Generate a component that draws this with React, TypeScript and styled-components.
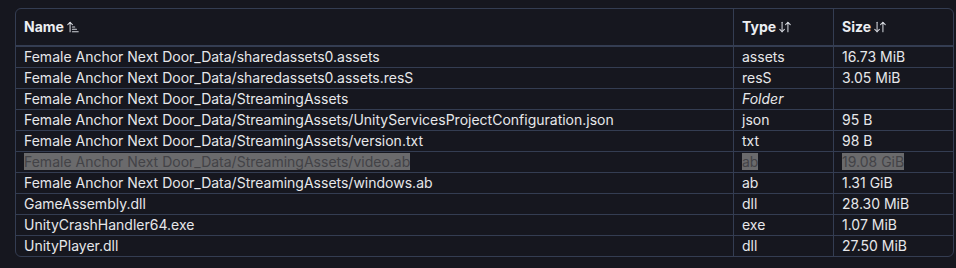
import styled, { createGlobalStyle } from "styled-components";
import { ArrowDownUp, ArrowUpNarrowWide } from "lucide-react";

interface FileRow {
	name: string;
	type: string;
	size: string;
	selected?: boolean;
	folder?: boolean;
}

const rows: FileRow[] = [
	{ name: "Female Anchor Next Door_Data/sharedassets0.assets", type: "assets", size: "16.73 MiB" },
	{ name: "Female Anchor Next Door_Data/sharedassets0.assets.resS", type: "resS", size: "3.05 MiB" },
	{ name: "Female Anchor Next Door_Data/StreamingAssets", type: "Folder", size: "", folder: true },
	{
		name: "Female Anchor Next Door_Data/StreamingAssets/UnityServicesProjectConfiguration.json",
		type: "json",
		size: "95 B",
	},
	{ name: "Female Anchor Next Door_Data/StreamingAssets/version.txt", type: "txt", size: "98 B" },
	{
		name: "Female Anchor Next Door_Data/StreamingAssets/video.ab",
		type: "ab",
		size: "19.08 GiB",
		selected: true,
	},
	{ name: "Female Anchor Next Door_Data/StreamingAssets/windows.ab", type: "ab", size: "1.31 GiB" },
	{ name: "GameAssembly.dll", type: "dll", size: "28.30 MiB" },
	{ name: "UnityCrashHandler64.exe", type: "exe", size: "1.07 MiB" },
	{ name: "UnityPlayer.dll", type: "dll", size: "27.50 MiB" },
];

const GlobalStyle = createGlobalStyle`
	html, body {
		margin: 0;
		background: #16171f;
	}
	body {
		padding: 8px 2px 0 15px;
		font-family: Inter, "Liberation Sans", sans-serif;
		color: #e6e7ea;
	}
`;

const TableFrame = styled.div`
	border: 1px solid #343d52;
	border-radius: 6px;
	overflow: hidden;
`;

const Table = styled.table`
	width: 100%;
	border-collapse: collapse;
	font-size: 14px;
	table-layout: fixed;
`;

// width is the content box; padding adds 16px
const HeadCell = styled.th<{ $width?: number }>`
	width: ${(p) => (p.$width ? `${p.$width}px` : "auto")};
	padding: 9px 8px;
	line-height: 18px;
	text-align: left;
	font-weight: 700;
	color: #eceef2;
	border-bottom: 2px solid #343d52;
	& + & {
		border-left: 1px solid #343d52;
	}
`;

const HeadLabel = styled.span`
	display: inline-flex;
	align-items: center;
	gap: 2px;
	svg {
		color: #d2d5db;
	}
`;

const Row = styled.tr`
	& + & td {
		border-top: 1px solid #343d52;
	}
`;

const Cell = styled.td<{ $italic?: boolean }>`
	padding: 1px 8px;
	line-height: 18px;
	white-space: nowrap;
	overflow: hidden;
	font-style: ${(p) => (p.$italic ? "italic" : "normal")};
	& + & {
		border-left: 1px solid #343d52;
	}
`;

const Text = styled.span<{ $selected?: boolean }>`
	background: ${(p) => (p.$selected ? "#6a6a6c" : "transparent")};
	color: ${(p) => (p.$selected ? "#434347" : "inherit")};
`;

export default function App() {
	return (
		<>
			<GlobalStyle />
			<TableFrame>
				<Table>
					<thead>
						<tr>
							<HeadCell>
								<HeadLabel>
									Name <ArrowUpNarrowWide size={14} strokeWidth={1.8} />
								</HeadLabel>
							</HeadCell>
							<HeadCell $width={83}>
								<HeadLabel>
									Type <ArrowDownUp size={14} strokeWidth={1.8} />
								</HeadLabel>
							</HeadCell>
							<HeadCell $width={103}>
								<HeadLabel>
									Size <ArrowDownUp size={14} strokeWidth={1.8} />
								</HeadLabel>
							</HeadCell>
						</tr>
					</thead>
					<tbody>
						{rows.map((r) => (
							<Row key={r.name}>
								<Cell>
									<Text $selected={r.selected}>{r.name}</Text>
								</Cell>
								<Cell $italic={r.folder}>
									<Text $selected={r.selected}>{r.type}</Text>
								</Cell>
								<Cell>
									<Text $selected={r.selected}>{r.size}</Text>
								</Cell>
							</Row>
						))}
					</tbody>
				</Table>
			</TableFrame>
		</>
	);
}
